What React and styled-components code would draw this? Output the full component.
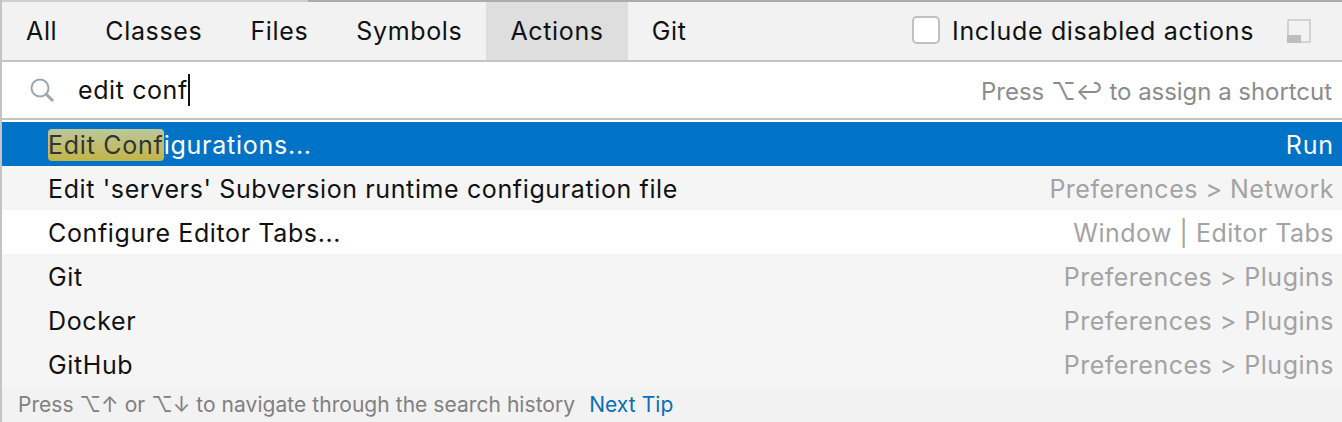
import React from 'react';
import styled, { createGlobalStyle } from 'styled-components';

const Global = createGlobalStyle`
  html, body { margin: 0; padding: 0; background: #fff; }
  body { font-family: Inter, "Noto Sans", sans-serif; -webkit-font-smoothing: antialiased; }
`;
const Popup = styled.div`
  width: 1342px; height: 422px; box-sizing: border-box; overflow: hidden;
  display: flex; flex-direction: column;
  border-left: 2px solid #c4c4c4;
`;
const TopEdge = styled.div`
  height: 2px; flex: none; background: linear-gradient(to right, #cfcfcf 306px, #ababab 306px);
`;
const TabBar = styled.div`
  height: 58px; flex: none; display: flex; align-items: stretch; background: #f2f2f2;
  border-bottom: 2px solid #c4c4c4;
`;
const Tab = styled.div`
  display: flex; align-items: center; padding: 0 24px; font-size: 25px; color: #111;
  letter-spacing: 0.65px; background: ${p => p.$active ? '#dedede' : 'transparent'};
`;
const Spacer = styled.div`flex: 1;`;
const DisabledOption = styled.label`
  display: flex; align-items: center; gap: 12px; font-size: 25px; color: #111; margin-right: 33px;
  letter-spacing: 0.67px;
`;
const Checkbox = styled.span`
  width: 28px; height: 28px; box-sizing: border-box; background: #fff;
  border: 2px solid #c0c0c0; border-radius: 5px; margin-top: -2px;
`;
const PinIcon = styled.svg`
  align-self: center; margin-right: 31px; width: 24px; height: 24px;
`;
const SearchBar = styled.div`
  height: 56px; flex: none; display: flex; align-items: center; background: #fff;
  border-bottom: 2px solid #c4c4c4; padding: 0 10px 0 27px; margin-bottom: 2px; font-size: 25px;
`;
const Query = styled.span`
  margin-left: 23px; color: #111; border-right: 2px solid #111; line-height: 32px;
  letter-spacing: 0.6px;
`;
const Hint = styled.span`
  margin-left: auto; color: #8c8c8c; font-size: 24px; padding-top: 2px; letter-spacing: -0.04px;
`;
const Rows = styled.div`
  height: 266px; flex: none; display: flex; flex-direction: column; background: #f5f5f5;
`;
const Row = styled.div`
  height: 44px; box-sizing: border-box; flex: none; display: flex; align-items: center;
  justify-content: space-between; padding: 2px 8px 0 46px; font-size: 25px;
  letter-spacing: ${p => p.$selected ? '0.75px' : '0.62px'};
  background: ${p => p.$selected ? '#0073c6' : p.$alt ? '#f5f5f5' : '#fff'};
  color: ${p => p.$selected ? '#fff' : '#111'};
`;
const Match = styled.span`
  display: inline-block; line-height: 32px;
  background: linear-gradient(#bcc89c, #c2b547); color: #333; border-radius: 4px;
`;
const Location = styled.span`
  letter-spacing: ${p => p.$selected ? '0.9px' : '0.5px'};
  color: ${p => p.$selected ? '#fff' : '#a3a3a3'};
`;
const Footer = styled.div`
  flex: 1; display: flex; align-items: center; background: #f2f2f2; padding: 0 0 2px 16px;
  font-size: 21px; color: #808080; gap: 14px; letter-spacing: 0.05px;
`;
const Link = styled.span`color: #0a6fb8;`;

const rows = [
  { label: "Edit 'servers' Subversion runtime configuration file", loc: 'Preferences > Network', alt: true },
  { label: 'Configure Editor Tabs...', loc: 'Window | Editor Tabs' },
  { label: 'Git', loc: 'Preferences > Plugins', alt: true },
  { label: 'Docker', loc: 'Preferences > Plugins', alt: true },
  { label: 'GitHub', loc: 'Preferences > Plugins', alt: true },
];

export default function App() {
  return (
    <Popup>
      <Global />
      <TopEdge />
      <TabBar>
        <Tab>All</Tab><Tab>Classes</Tab><Tab>Files</Tab><Tab>Symbols</Tab>
        <Tab $active>Actions</Tab><Tab>Git</Tab>
        <Spacer />
        <DisabledOption><Checkbox />Include disabled actions</DisabledOption>
        <PinIcon viewBox="0 0 24 24">
          <rect x="1" y="1" width="22" height="22" fill="none" stroke="#c8c8c8" strokeWidth="1.5" />
          <rect x="0" y="16" width="14" height="8" fill="#bdbdbd" />
        </PinIcon>
      </TabBar>
      <SearchBar>
        <svg width="26" height="26" viewBox="0 0 26 26" fill="none">
          <circle cx="11" cy="11" r="8.5" stroke="#9aa7b0" strokeWidth="2" />
          <path d="M17 17l7 7" stroke="#9aa7b0" strokeWidth="3" />
        </svg>
        <Query>edit conf</Query>
        <Hint>Press ⌥↩ to assign a shortcut</Hint>
      </SearchBar>
      <Rows>
        <Row $selected><span><Match>Edit Conf</Match>igurations...</span><Location $selected>Run</Location></Row>
        {rows.map(r => (
          <Row key={r.label} $alt={r.alt}><span>{r.label}</span><Location>{r.loc}</Location></Row>
        ))}
      </Rows>
      <Footer><span>Press ⌥↑ or ⌥↓ to navigate through the search history</span><Link>Next Tip</Link></Footer>
    </Popup>
  );
}
